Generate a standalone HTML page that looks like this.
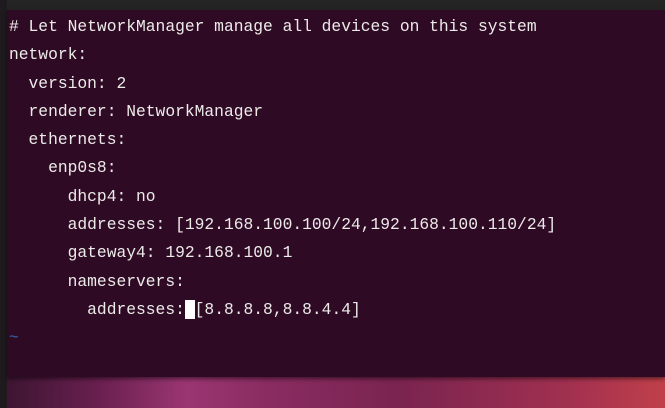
<!DOCTYPE html>
<html><head><style>
html,body{margin:0;padding:0;width:665px;height:408px;overflow:hidden;}
body{position:relative;background:linear-gradient(90deg,#3a1430 0%,#6a2050 15%,#9a3672 28%,#8a2c62 40%,#7a2450 60%,#a03050 85%,#c0404a 100%);}
.strip{position:absolute;left:0;top:0;width:7px;height:408px;background:#1e1a1e;}
.title{position:absolute;left:7px;top:0;width:658px;height:10px;background:#242424;}
.term{position:absolute;left:7px;top:10px;width:658px;height:367px;background:#2f0a25;box-shadow:0 2px 4px rgba(0,0,0,.5);}
pre{position:absolute;left:9px;top:13px;margin:0;font-family:"Liberation Mono",monospace;font-size:16.3px;line-height:28.3px;color:#ecebe8;}
.cur{background:#fff;color:#2f0a25;}
.t{color:#3465a4;}
</style></head><body>
<div class="strip"></div><div class="title"></div>
<div class="term"></div>
<pre># Let NetworkManager manage all devices on this system
network:
  version: 2
  renderer: NetworkManager
  ethernets:
    enp0s8:
      dhcp4: no
      addresses: [192.168.100.100/24,192.168.100.110/24]
      gateway4: 192.168.100.1
      nameservers:
        addresses:<span class="cur"> </span>[8.8.8.8,8.8.4.4]
<span class="t">~</span></pre>
</body></html>
